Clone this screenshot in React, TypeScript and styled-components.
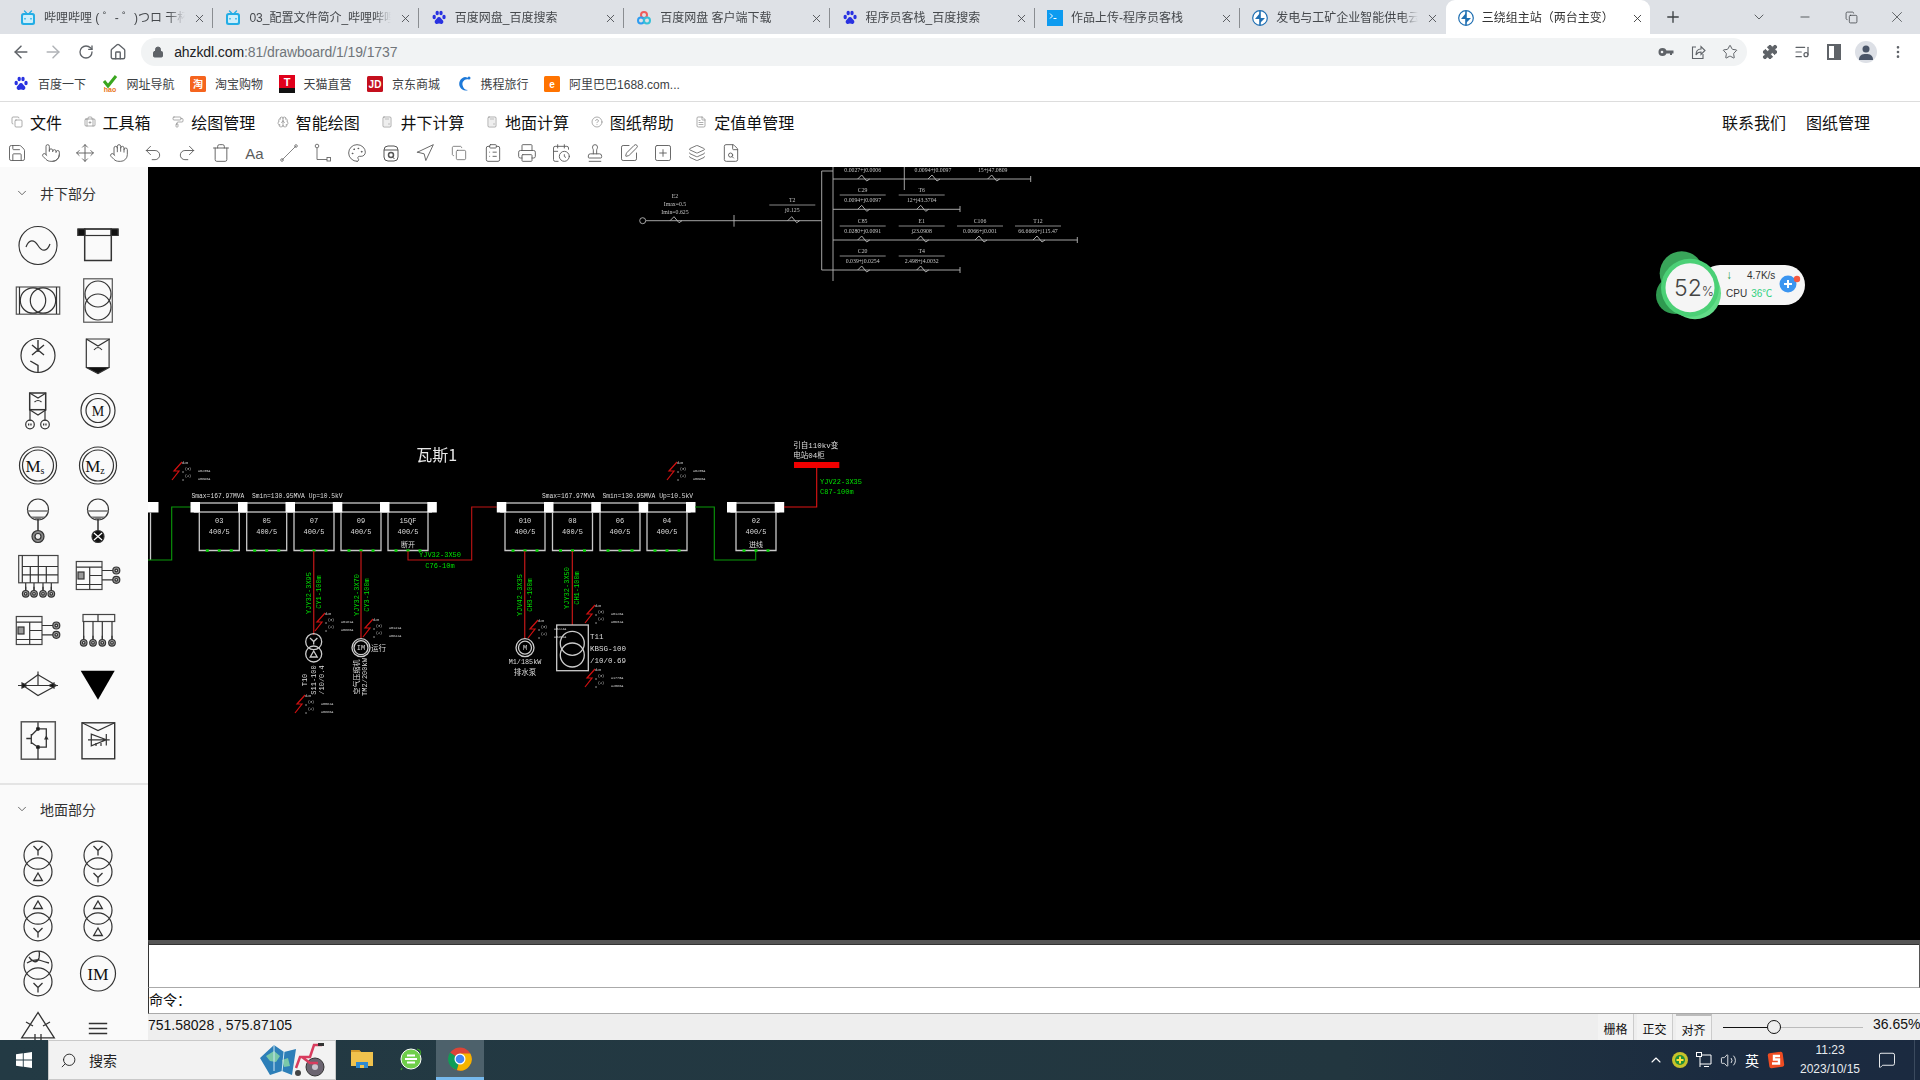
import React from "react";
import styled, { createGlobalStyle } from "styled-components";
import {
  ArrowLeft, ArrowRight, RotateCw, House, Lock, Star, Puzzle, ListMusic, EllipsisVertical,
  ChevronDown, Minus, X, Plus, Copy, BriefcaseMedical, PaintRoller, Brain, Calculator, CircleHelp, FileText,
  Save, Pointer, Move, Hand, Undo2, Redo2, Trash, Palette, Navigation, ClipboardList, Printer, Search, ChevronUp, Volume2, MessageSquare, CalendarClock, Stamp, SquarePen, SquarePlus, FileSearch, Layers,
} from "lucide-react";

const CJK = `"Liberation Sans", "Noto Sans CJK SC", sans-serif`;

const Global = createGlobalStyle`
  html, body { margin: 0; padding: 0; background: #fff; }
  body { font-family: ${CJK}; overflow: hidden; }
  #root { width: 1920px; height: 1080px; }
`;

const Page = styled.div`
  width: 1920px; height: 1080px; display: flex; flex-direction: column; overflow: hidden; background: #fff;
`;

/* ---------- browser chrome ---------- */
const TabStrip = styled.div`
  height: 34px; background: #dee1e6; display: flex; align-items: stretch; padding-left: 8px; flex: none;
`;
const Tab = styled.div<{ $active?: boolean }>`
  width: 204.4px; flex: none; box-sizing: border-box; display: flex; align-items: center; gap: 8px; padding: 2px 6px 0 12px;
  background: ${p => (p.$active ? "#fff" : "transparent")};
  border-radius: ${p => (p.$active ? "9px 9px 0 0" : "0")};
  color: ${p => (p.$active ? "#333" : "#45484c")};
`;
const TabTitle = styled.span`
  flex: 1; min-width: 0; white-space: nowrap; overflow: hidden; font-size: 12px; line-height: 16px;
  -webkit-mask-image: linear-gradient(to right, #000 88%, transparent 100%);
  mask-image: linear-gradient(to right, #000 88%, transparent 100%);
`;
const TabDivider = styled.div<{ $hidden?: boolean }>`
  width: 1px; height: 20px; align-self: center; flex: none; margin-top: 2px;
  background: ${p => (p.$hidden ? "transparent" : "#8a8d91")};
`;
const NewTab = styled.div`
  width: 44px; display: flex; align-items: center; justify-content: center; color: #3c4043; flex: none;
`;
const WindowButtons = styled.div`
  margin-left: auto; display: flex; align-items: center; color: #3c4043; padding-right: 0;
`;
const WinButton = styled.div`
  width: 46px; height: 30px; display: flex; align-items: center; justify-content: center;
`;
const NavRow = styled.div`
  height: 32px; box-sizing: border-box; padding: 4px 10px 0 9px; flex: none; background: #fff; display: flex; align-items: flex-start; color: #5f6368;
`;
const NavButton = styled.div<{ $dim?: boolean; $right?: boolean }>`
  width: 24px; height: 28px; display: flex; align-items: center; justify-content: center; flex: none;
  margin-right: ${p => (p.$right ? "0" : "8.3px")};
  margin-left: ${p => (p.$right ? "8px" : "0")};
  color: ${p => (p.$dim ? "#b0b3b7" : "#5f6368")};
`;
const UrlBar = styled.div`
  flex: 1; height: 28px; margin: 0 3px 0 3px; border-radius: 14px; background: #f1f3f4; display: flex; align-items: center;
  padding: 0 9px 0 11px; gap: 10px;
`;
const UrlText = styled.div`
  font-size: 14px; color: #70757a; flex: 1; letter-spacing: -0.1px;
  b { font-weight: normal; color: #202124; }
`;
const UrlActions = styled.div`
  display: flex; gap: 16px; color: #5f6368;
`;
const Avatar = styled.div`
  width: 22px; height: 22px; border-radius: 50%; background: #dde0e6; display: flex; align-items: center; justify-content: center;
`;
const Bookmarks = styled.div`
  height: 36px; flex: none; box-sizing: border-box; border-bottom: 1px solid #ddd; display: flex; align-items: center; padding: 0 0 0 13px; gap: 15.5px;
`;
const Bookmark = styled.div`
  display: flex; align-items: center; gap: 9px; font-size: 12px; color: #3c4043;
`;

/* ---------- app header ---------- */
const MenuBar = styled.div`
  height: 34px; flex: none; box-sizing: border-box; padding: 6px 50px 0 11px; display: flex; align-items: center; gap: 21.6px; background: #fff;
`;
const MenuItem = styled.div`
  display: flex; align-items: center; gap: 7px; font-size: 16px; color: #111; white-space: nowrap;
  svg { color: #8a8a8a; flex: none; }
`;
const MenuRight = styled.div`
  margin-left: auto; display: flex; gap: 20px; font-size: 16px; color: #111;
`;
const ToolBar = styled.div`
  height: 31px; flex: none; box-sizing: border-box; padding: 3px 0 0 6.5px; display: flex; align-items: center; gap: 14px; color: #5c5c5c; background: #fff;
`;
const ToolIcon = styled.div`
  width: 20px; height: 20px; flex: none; display: flex; align-items: center; justify-content: center; font-size: 15px; color: #5c5c5c;
`;

/* ---------- work area ---------- */
const Work = styled.div`
  flex: 1; min-height: 0; display: flex;
`;
const Sidebar = styled.aside`
  width: 148px; flex: none; background: #fafafa; overflow: hidden; display: flex; flex-direction: column;
`;
const SectionHeader = styled.div<{ $tight?: boolean }>`
  height: ${p => (p.$tight ? "50.5px" : "51px")}; flex: none; box-sizing: border-box; padding: 0 0 ${p => (p.$tight ? "3px" : "0")} 15px; display: flex; align-items: center; gap: 11px; font-size: 14px; color: #333;
  svg { color: #555; }
`;
const SymbolGrid = styled.div<{ $divider?: boolean }>`
  flex: none; display: grid; grid-template-columns: 60px 60px; grid-auto-rows: 55px; padding: 0 0 15px 8px;
  border-bottom: ${p => (p.$divider ? "2px solid #e4e4e4" : "none")};
`;
const Sym = styled.svg`
  width: 60px; height: 55px; fill: none; stroke: #333; stroke-width: 1.2px; display: block;
  text { stroke: none; fill: #111; font-family: "Liberation Serif", serif; text-anchor: middle; }
`;
const Main = styled.div`
  flex: 1; min-width: 0; display: flex; flex-direction: column;
`;
const Canvas = styled.div`
  height: 773px; flex: none; background: #000; position: relative; overflow: hidden;
`;
const Drawing = styled.svg`
  display: block; width: 1772px; height: 773px;
  text { font-family: "Liberation Mono", "Noto Sans CJK SC", monospace; }
`;
const OutputBox = styled.div`
  flex: none; box-sizing: border-box; background: #fff; border-top: 4px solid #555; border-left: 1px solid #333; border-right: 1px solid #555;
  box-shadow: inset 0 1px 0 #333;
  height: 48px; border-bottom: 1px solid #aaa;
`;
const CommandLine = styled.div`
  height: 26px; flex: none; box-sizing: border-box; background: #fff; border-left: 1px solid #333; border-bottom: 1px solid #aaa; display: flex; align-items: center; font-size: 14px; color: #111; padding-bottom: 4px;
`;
const StatusBar = styled.div`
  height: 26px; flex: none; background: #eee; display: flex; align-items: center; font-size: 14px; color: #111;
`;
const Coords = styled.span`
  margin-bottom: 4px;
`;
const StatusRight = styled.div`
  margin-left: auto; display: flex; align-items: stretch; height: 100%;
`;
const ModeButton = styled.div<{ $on?: boolean }>`
  width: 36px; box-sizing: border-box; margin-right: 3px; font-size: 12px; display: flex; align-items: center; justify-content: center; padding-top: 3px;
  background: #f3f3f3; border-right: 1px solid #ccc; color: #111;
  border-top: ${p => (p.$on ? "2px solid #bbb" : "0")};
`;
const SliderTrack = styled.div`
  width: 140px; margin: 0 10px 0 8px; align-self: center; height: 1px; background: #bbb; display: flex; align-items: center;
`;
const SliderFill = styled.div`
  height: 1px; background: #111;
`;
const SliderThumb = styled.div`
  width: 14px; height: 14px; border-radius: 50%; border: 1.5px solid #111; background: #eee; box-sizing: border-box; flex: none;
`;
const Zoom = styled.div`
  width: 47px; flex: none; align-self: flex-start; margin-top: 2px; white-space: nowrap;
`;

/* ---------- floating widget ---------- */
const Monitor360 = styled.div`
  position: absolute; left: 1502px; top: 78px; width: 156px; height: 76px;
`;
const Pill = styled.div`
  position: absolute; left: 50px; top: 20px; width: 105px; height: 40px; box-sizing: border-box; border-radius: 20px; background: #f6f6f6; padding: 4px 0 0 26px; font-size: 10px; display: flex; flex-direction: column; gap: 5px;
`;
const PillRow = styled.div`
  display: flex; align-items: center; color: #333; white-space: nowrap; line-height: 13px;
`;
const PillArrow = styled.span`
  color: #1d9c4f; width: 21px; font-size: 12px; font-weight: 700;
`;
const PillGreen = styled.span`
  color: #2fd07e; margin-left: 4px;
`;
const RingArt = styled.svg`
  position: absolute; left: 0; top: 0; width: 156px; height: 76px;
  text { font-family: "Inter", "Liberation Sans", sans-serif; fill: #444; }
`;

/* ---------- taskbar ---------- */
const Taskbar = styled.div`
  height: 40px; flex: none; display: flex; align-items: stretch; color: #fff;
  background: linear-gradient(to right, #233a44 0%, #22363f 70%, #1b2b40 90%, #1b2a40 100%);
`;
const StartButton = styled.div`
  width: 48px; flex: none; display: flex; align-items: center; justify-content: center;
`;
const SearchBox = styled.div`
  width: 288px; flex: none; box-sizing: border-box; background: #f2f2f2; border: 1px solid #c9c9c9; display: flex; align-items: center; padding: 0 9px 0 11px; color: #222; font-size: 14px; gap: 12px;
`;
const SearchArt = styled.svg`
  margin-left: auto; flex: none;
`;
const TaskIcons = styled.div`
  display: flex; gap: 1px; padding-left: 2px;
`;
const TaskIcon = styled.div<{ $active?: boolean }>`
  width: 48px; flex: none; box-sizing: border-box; display: flex; align-items: center; justify-content: center;
  background: ${p => (p.$active ? "#4d616b" : "transparent")};
  border-bottom: ${p => (p.$active ? "3px solid #76b9ed" : "3px solid transparent")};
`;
const Tray = styled.div`
  margin-left: auto; display: flex; align-items: center; padding-right: 5px;
`;
const TrayIcon = styled.div`
  width: 18px; height: 24px; margin-right: 6px; display: flex; align-items: center; justify-content: center; font-size: 14px;
`;
const Clock = styled.div`
  width: 72px; margin-left: 3px; text-align: center; font-size: 12px; line-height: 19px; color: #e8ecef; white-space: nowrap;
`;
const Notify = styled.div`
  width: 42px; display: flex; justify-content: center;
`;
const EdgeLine = styled.div`
  width: 1px; height: 100%; margin-left: 6px; background: #3b4a5e;
`;

/* ---------- little drawings ---------- */
const BiliIcon = () => (
  <svg width="16" height="16" viewBox="0 0 16 16">
    <path d="M4.500 1 6.500 3M11.500 1 9.500 3" stroke="#23ade5" strokeWidth="1.300" strokeLinecap="round" />
    <rect x="1" y="3" width="14" height="12" rx="2.500" fill="#23ade5" />
    <rect x="3" y="5" width="10" height="8" rx="1" fill="#cdeefa" />
    <path d="M5 8v1.500M11 8v1.500" stroke="#23ade5" strokeWidth="1.400" />
  </svg>
);
const PawIcon = ({ s = 16 }: { s?: number }) => (
  <svg width={s} height={s} viewBox="0 0 16 16" fill="#2932e1">
    <ellipse cx="3.200" cy="7" rx="1.700" ry="2.200" /><ellipse cx="6.200" cy="3" rx="1.700" ry="2.300" /><ellipse cx="10" cy="3" rx="1.700" ry="2.300" /><ellipse cx="13" cy="7" rx="1.700" ry="2.200" />
    <path d="M8 7c-2 0-2 2-3.500 3-1.500 1.200-1 4 1.500 4 1 0 1.200-.4 2-.4s1 .4 2 .4c2.600 0 3-2.800 1.500-4C10 9 10 7 8 7z" />
  </svg>
);
const NetdiskIcon = () => (
  <svg width="16" height="16" viewBox="0 0 16 16" fill="none" strokeWidth="2">
    <circle cx="8" cy="5" r="3" stroke="#ef5b5b" /><circle cx="5" cy="10.500" r="3" stroke="#2e9cf0" /><circle cx="11" cy="10.500" r="3" stroke="#35c0d8" />
  </svg>
);
const TermIcon = () => (
  <svg width="16" height="16" viewBox="0 0 16 16">
    <rect width="16" height="16" fill="#0d9bf0" />
    <path d="M3 3.500 5.500 6 3 8.500M6.500 8.500h3" stroke="#fff" strokeWidth="1" fill="none" />
  </svg>
);
const CompanyIcon = () => (
  <svg width="16" height="16" viewBox="0 0 16 16">
    <circle cx="8" cy="8" r="7.300" fill="#fff" stroke="#1f6fb2" strokeWidth="1.200" />
    <path d="M8 1v14" stroke="#1f6fb2" strokeWidth="1.600" />
    <path d="M8 3 3 9h5zM8 13l5-5H8z" fill="#1f6fb2" />
  </svg>
);
const BmSquare = ({ bg, t, c = "#fff" }: { bg: string; t: string; c?: string }) => (
  <svg width="16" height="16" viewBox="0 0 16 16">
    <rect width="16" height="16" rx="1.500" fill={bg} />
    <text x="8" y="12" fontSize="10" fontWeight="700" fill={c} textAnchor="middle" fontFamily="Liberation Sans, Noto Sans CJK SC, sans-serif">{t}</text>
  </svg>
);
const HaoIcon = () => (
  <svg width="16" height="18" viewBox="0 0 16 18">
    <path d="M2 6 6 11 14 1" stroke="#3aa61f" strokeWidth="3" fill="none" />
    <text x="8" y="17" fontSize="7" fill="#e8761a" textAnchor="middle" fontFamily="Liberation Sans, sans-serif" fontWeight="700">hao</text>
  </svg>
);
const TmallIcon = () => (
  <svg width="16" height="18" viewBox="0 0 16 18">
    <rect width="16" height="18" fill="#111" /><rect width="16" height="13" fill="#e0001b" />
    <text x="8" y="11" fontSize="11" fontWeight="700" fill="#fff" textAnchor="middle" fontFamily="Liberation Sans, sans-serif">T</text>
  </svg>
);
const CtripIcon = () => (
  <svg width="16" height="18" viewBox="0 0 16 18" fill="none">
    <path d="M9 2C4 3 2 8 4 12c1.500 3 5 4.500 8 3-3 0-5-2-5.500-5C6 7 8 4 13 4 12 3 11 2 9 2z" fill="#1d79d9" />
    <circle cx="13" cy="3" r="1.500" fill="#1d79d9" />
  </svg>
);
const KeyIcon = () => (
  <svg width="16" height="16" viewBox="0 0 16 16" fill="#5f6368"><circle cx="4.500" cy="8" r="4" /><circle cx="4" cy="8" r="1.300" fill="#f1f3f4" /><path d="M8 6.500h7.500v3H14v1.500h-2V9.500H8z" /></svg>
);
const ShareIcon = () => (
  <svg width="16" height="16" viewBox="0 0 16 16" fill="none" stroke="#5f6368" strokeWidth="1.100"><path d="M6 3H2.500v11.500h10.500V10" /><path d="M6 11c0-4 2-6 5-6V2.500l4 4-4 4V8c-2 0-4 1-5 3z" /></svg>
);
const NetIcon = () => (
  <svg width="18" height="18" viewBox="0 0 18 18" fill="none" stroke="#fff" strokeWidth="1"><rect x="1.500" y="1.500" width="5" height="4" /><path d="M6.500 4H16v9H5M5 5.500V16M9 15.500h5" /></svg>
);

const ToolLine = () => <svg width="20" height="20" viewBox="0 0 20 20" fill="none" stroke="#777" strokeWidth=".9"><path d="M3 17 17 3" /><circle cx="3" cy="17" r="1.300" /><circle cx="17" cy="3" r="1.300" /></svg>;
const ToolPoly = () => <svg width="20" height="20" viewBox="0 0 20 20" fill="none" stroke="#666" strokeWidth=".9"><circle cx="4" cy="3" r="1.800" /><path d="M4 5v11.500h10" /><rect x="14" y="14.500" width="3.500" height="3.500" /></svg>;
const ToolQ = () => <svg width="20" height="20" viewBox="0 0 20 20" fill="none" stroke="#555" strokeWidth="1"><rect x="3" y="3" width="14" height="15" rx="4" /><path d="M3 7h14" /><circle cx="10" cy="12" r="2.500" strokeWidth="1.500" /><path d="m11.500 14 2 2" /></svg>;

const Sine = () => (
  <Sym viewBox="0 0 60 55"><circle cx="30" cy="27.500" r="19" /><path d="M18 29c3-8 8-8 12-1.500s9 6.500 12-1.500" /></Sym>
);
const Breaker = () => (
  <Sym viewBox="0 0 60 55"><rect x="16.700" y="11" width="26.600" height="31.500" strokeWidth="1.500" /><path d="M10 11h40v6.500H10z" /><path d="M10 11h7v6.500h-7zM43 11h7v6.500h-7z" fill="#111" /><path d="M17 17.500h26" /></Sym>
);
const DualH = () => (
  <Sym viewBox="0 0 60 55"><rect x="8.300" y="14" width="43.400" height="27.200" stroke="#555" /><path d="M11.500 14v27M48.500 14v27" /><circle cx="25" cy="27.500" r="12.700" /><circle cx="35" cy="27.500" r="12.700" /></Sym>
);
const DualV = () => (
  <Sym viewBox="0 0 60 55"><rect x="15.700" y="5.800" width="28.600" height="43.400" stroke="#555" /><circle cx="30" cy="21" r="13" /><circle cx="30" cy="34" r="13" /></Sym>
);
const StarMotor = () => (
  <Sym viewBox="0 0 60 55"><circle cx="30" cy="27.500" r="17" /><path d="M30 12v12M24 17l12 10M36 17 24 27" strokeWidth="1.400" /><path d="M22.300 33 30 37.500v7" strokeWidth="1.400" /></Sym>
);
const ChevBox = () => (
  <Sym viewBox="0 0 60 55"><path d="M18.300 11h22.800v28.500l-5 0H18.300z" /><path d="M18.300 11 30 18l11.700-7" /><path d="M26 22q4-5 8 0" /><path d="M18.300 39.500h22.800L30 45.500z" fill="#111" /></Sym>
);
const PinBox = () => (
  <Sym viewBox="0 0 60 55"><rect x="21.700" y="10" width="16" height="16.700" strokeWidth="1.500" /><path d="M21.700 10 30 15l8-5M26.500 19q3.500-3 7 0M21.700 26.700 30 32l8-5.300" /><path d="M22 27v11M37 27v11" /><circle cx="22" cy="41.500" r="4.300" /><circle cx="37" cy="41.500" r="4.300" /><path d="M20 41.500h4M35 41.500h4" strokeWidth="1.800" strokeDasharray="1 .7" /></Sym>
);
const MotorM = () => (
  <Sym viewBox="0 0 60 55"><circle cx="30" cy="27.500" r="17" /><circle cx="30" cy="27.500" r="12" /><text x="30" y="33" fontSize="14">M</text></Sym>
);
const MotorSub = ({ sub }: { sub: string }) => (
  <Sym viewBox="0 0 60 55"><circle cx="30" cy="27.500" r="18.500" /><circle cx="30" cy="27.500" r="15.500" /><text x="27" y="34" fontSize="17">M<tspan fontSize="10" dy="2">{sub}</tspan></text></Sym>
);
const Ball = ({ black }: { black?: boolean }) => (
  <Sym viewBox="0 0 60 55">
    <circle cx="30" cy="16.500" r="10.500" /><path d="M19.500 18h21" strokeWidth="1.800" stroke="#888" /><path d="M22 23.500h16L30 27z" fill="#777" stroke="none" />
    <path d="M30 26v14" strokeWidth="1.500" />
    <circle cx="30" cy="43.500" r="6" fill={black ? "#111" : "#888"} />
    {black ? <path d="M26 40l8 7M34 40l-8 7" stroke="#fff" /> : <circle cx="30" cy="43.500" r="3" fill="#eee" />}
  </Sym>
);
const Pins = ({ xs, y }: { xs: number[]; y: number }) => (
  <>{xs.map(x => <g key={x}><path d={`M${x} ${y - 7}v3.500`} /><circle cx={x} cy={y} r="3.300" fill="#999" /><circle cx={x} cy={y} r="1.300" fill="#eee" /></g>)}</>
);
const GridPanel = () => (
  <Sym viewBox="0 0 60 55"><rect x="10.700" y="7.500" width="39.300" height="27.300" stroke="#444" /><path d="M14.300 7.500v27.300M30.300 7.500v27.300M14 18.500h36M14 26.800h36M22.300 18.500v16.300M38.300 18.500v16.300" /><path d="M17.700 35v7M26 35v7M35 35v7M43.300 35v7" /><Pins xs={[17.700, 26, 35, 43.300]} y={45.800} /></Sym>
);
const SidePanel = () => (
  <Sym viewBox="0 0 60 55"><rect x="8.300" y="13.500" width="25.700" height="28" stroke="#444" /><path d="M8.300 19.200H34M8.300 36.500H34M21.700 19.200v22.300M21.700 27.500H34" /><rect x="10" y="24" width="6" height="7" fill="#999" /><path d="M34 22.500h11M34 31.800h11" /><circle cx="48.300" cy="22.500" r="3.500" fill="#999" /><circle cx="48.300" cy="31.800" r="3.500" fill="#999" /><circle cx="48.300" cy="22.500" r="1.300" fill="#eee" /><circle cx="48.300" cy="31.800" r="1.300" fill="#eee" /></Sym>
);
const TopPanel = () => (
  <Sym viewBox="0 0 60 55"><rect x="15" y="11.500" width="31.700" height="7" stroke="#444" /><path d="M30 11.500v7M15.700 18.500V36M25 18.500V36M34.300 18.500V36M44 18.500V36" /><Pins xs={[15.700, 25, 34.300, 44]} y={39.800} /></Sym>
);
const Diamond = () => (
  <Sym viewBox="0 0 60 55"><path d="M30 16.800 48.300 27.500 30 37.500 15 27.500z" /><path d="M10 27.500h40M30 13.500v14" /><path d="M14 25v5l5-2.500zM46 25v5l-5-2.500z" fill="#111" /></Sym>
);
const BlackTri = () => (
  <Sym viewBox="0 0 60 55"><path d="M12.700 12.800h34L30 41.800z" fill="#000" stroke="none" /></Sym>
);
const Igbt = () => (
  <Sym viewBox="0 0 60 55"><rect x="13.300" y="8.800" width="34" height="37.400" stroke="#555" strokeWidth="1.500" /><path d="M30 9.200v6.600h8.300v18.400H30v12.300M30 15.800l-6.700 6.700M23.300 21v10M18.300 25.500h5M23.300 29.500l6.700 4.700" strokeWidth="1.300" /><circle cx="30" cy="15.800" r="1.500" fill="#111" /><circle cx="30" cy="34.200" r="1.500" fill="#111" /><path d="M37 26h2.600l-1.300-2.500z" fill="#111" /></Sym>
);
const DiodeBox = () => (
  <Sym viewBox="0 0 60 55"><rect x="14" y="9.800" width="32.700" height="36" strokeWidth="1.400" /><path d="M14 9.800 30 17.500l16.700-7.700" /><path d="M23.300 21.200v11.600l15-6zM38.300 21v11.600M20 26.800h21.700" /><path d="M28 30v3M33 30v3" /></Sym>
);
const WindingY = ({ cy }: { cy: number }) => <path d={`M25.500 ${cy - 4}l4.500 4.500 4.500-4.500M30 ${cy + .5}v5`} strokeWidth="1.300" />;
const WindingD = ({ cy }: { cy: number }) => <path d={`M30 ${cy - 4}l4.300 7.500h-8.600z`} strokeWidth="1.300" />;
const Transformer = ({ top, bottom }: { top: "Y" | "D" | "W"; bottom: "Y" | "D" }) => (
  <Sym viewBox="0 0 60 55">
    <circle cx="30" cy="19.200" r="14" /><circle cx="30" cy="35.800" r="14" />
    {top === "Y" && <WindingY cy={14} />}
    {top === "D" && <WindingD cy={14} />}
    {top === "W" && <path d="M21 11q7 9 10 1 1-4 0-7M19 17q6-4 12-3 6 2 10 3" strokeWidth="1.300" />}
    {bottom === "Y" ? <WindingY cy={41} /> : <WindingD cy={41} />}
  </Sym>
);
const MotorIM = () => (
  <Sym viewBox="0 0 60 55"><circle cx="30" cy="27.500" r="17.500" /><text x="30" y="34" fontSize="17.500">IM</text></Sym>
);
const TriBreak = () => (
  <Sym viewBox="0 0 60 55"><path d="M30 11.500 13.700 36.800h32.600zM18 21l7 4M42 21l-7 4M27 33v8M33 33v8" strokeWidth="1.300" /></Sym>
);
const Bars = () => (
  <Sym viewBox="0 0 60 55"><path d="M20.800 22.500h18.400M20.800 27.500h18.400M20.800 32.500h18.400" strokeWidth="1.400" /></Sym>
);

/* ---------- diagram helpers (screen coordinates) ---------- */
const LINE = "#c9c9c9";
const SERIF = { fontFamily: '"Liberation Serif", serif' };
const Wave = ({ x, y }: { x: number; y: number }) => (
  <path d={`M${x - 5} ${y}L${x - 1} ${y - 4}L${x + 4} ${y + 2}L${x + 7} ${y}`} fill="none" stroke="#bbb" strokeWidth=".9" />
);
const NetLabel = ({ x, y, name, value }: { x: number; y: number; name: string; value: string }) => (
  <g fontSize="5.800" fill="#c4c4c4" textAnchor="middle">
    {name && <text x={x} y={y + 2} style={SERIF}>{name}</text>}
    <path d={`M${x - 23} ${y + 5}h46`} stroke="#aaa" strokeWidth=".8" />
    <text x={x} y={y + 12} style={SERIF}>{value}</text>
  </g>
);
const Bus = ({ xs }: { xs: number[] }) => (
  <g>
    <rect x={xs[0] + 4} y="503" width={xs[xs.length - 1] - xs[0]} height="9" fill="none" stroke={LINE} strokeWidth="1.300" />
    {xs.map(x => <rect key={x} x={x} y="502" width="9.500" height="10.500" fill="#fff" />)}
  </g>
);
const Panel = ({ x, a, b, c }: { x: number; a: string; b: string; c?: string }) => (
  <g>
    <path d={`M${x} 512V550.500H${x + 40}V512`} fill="none" stroke={LINE} strokeWidth="1.300" />
    <g fontSize="7" fill="#ddd" textAnchor="middle">
      <text x={x + 20} y="522.500">{a}</text>
      <text x={x + 20} y="533.500">{b}</text>
      {c && <text x={x + 20} y="547">{c}</text>}
    </g>
    {[8, 20, 32].map(d => <rect key={d} x={x + d - 1.500} y="549.300" width="3" height="2.500" fill="#0c0" />)}
  </g>
);
const Rot = ({ x, y, t, c = "#00e000", s = 7 }: { x: number; y: number; t: string; c?: string; s?: number }) => (
  <text transform={`translate(${x} ${y}) rotate(-90)`} fontSize={s} fill={c} textAnchor="middle" dominantBaseline="central">{t}</text>
);
const Fault = ({ x, y, a, b, n = "d20" }: { x: number; y: number; a: string; b: string; n?: string }) => (
  <g>
    <path d={`M${x + 5} ${y - 9}L${x - 3} ${y}L${x + 2} ${y}L${x - 5} ${y + 9}`} fill="none" stroke="#d01010" strokeWidth="1.200" />
    <g fontSize="3.400" fill="#ddd">
      <text x={x + 5} y={y - 7}>{n}</text>
      <text x={x + 5} y={y + 1.500}>I</text>
      <text x={x + 8} y={y - 1}>(3)</text>
      <text x={x + 21} y={y + .5}>={a}</text>
      <text x={x + 5} y={y + 9.500}>I</text>
      <text x={x + 8} y={y + 6}>(2)</text>
      <text x={x + 21} y={y + 8.500}>={b}</text>
    </g>
  </g>
);

const busA = [190.500, 238, 285.500, 332.800, 380, 427.300];
const busB = [496.800, 544, 591.300, 638.700, 686];
const branchTicks: [number, number][] = [[862.7, 179], [933, 179], [992.7, 179], [862.7, 209.3], [921.7, 209.3], [862.7, 240], [921.7, 240], [980, 240], [1038, 240], [862.7, 270], [921.7, 270]];

const Diagram = () => (
  <Drawing viewBox="148 167 1772 773">
    <g style={{ filter: "blur(.35px)" }}>
      {/* network diagram */}
      <g stroke="#b5b5b5" strokeWidth=".9" fill="none">
        <circle cx="642.700" cy="220.700" r="3" />
        <path d="M646 220.700H821.700M734 215V226.700M821.700 171V270M821.700 171H833M833 167V281M833 179H1030.700M1030.700 176V182M904.300 167V190M833 209.300H960M960 206V212M833 240H1077.300M1077.300 237V243M821.700 270H960M960 267V273" />
      </g>
      <Wave x={675} y={220.700} /><Wave x={792.700} y={220.700} />
      {branchTicks.map(([x, y]) => <Wave key={`${x}-${y}`} x={x} y={y} />)}
      <g fontSize="5.800" fill="#c4c4c4" textAnchor="middle">
        <text x="675" y="198" style={SERIF}>E2</text>
        <text x="675" y="206" style={SERIF}>Imax=0.5</text>
        <text x="675" y="214" style={SERIF}>Imin=0.625</text>
        <text x="862.700" y="172" style={SERIF}>0.0027+j0.0006</text>
        <text x="933" y="172" style={SERIF}>0.0094+j0.0097</text>
        <text x="992.700" y="172" style={SERIF}>15+j47.0809</text>
      </g>
      <NetLabel x={792.300} y={200} name="T2" value="j0.125" />
      <NetLabel x={862.700} y={190} name="C29" value="0.0094+j0.0097" />
      <NetLabel x={921.700} y={190} name="T6" value="12+j43.3704" />
      <NetLabel x={862.700} y={221} name="C85" value="0.0280+j0.0091" />
      <NetLabel x={921.700} y={221} name="E1" value="j23.0908" />
      <NetLabel x={980} y={221} name="C106" value="0.0066+j0.001" />
      <NetLabel x={1038} y={221} name="T12" value="66.6666+j115.47" />
      <NetLabel x={862.700} y={251} name="C20" value="0.039+j0.0254" />
      <NetLabel x={921.700} y={251} name="T4" value="2.498+j4.0032" />

      {/* bus A */}
      <rect x="148" y="502" width="10.500" height="10.500" fill="#fff" />
      <path d="M150.500 512.500V560" stroke={LINE} strokeWidth="1.300" fill="none" />
      <path d="M148 560H171.700V507H190.700" stroke="#0a9a0a" strokeWidth="1.100" fill="none" />
      <Bus xs={busA} />
      <text x="191.500" y="498" fontSize="6.300" fill="#ddd" xmlSpace="preserve">Smax=167.97MVA  Smin=130.95MVA Up=10.5kV</text>
      <text x="436.700" y="461" fontSize="16" fill="#e8e8e8" textAnchor="middle" style={{ fontFamily: '"Noto Sans CJK SC", serif' }}>瓦斯1</text>
      <Panel x={199.300} a="03" b="400/5" />
      <Panel x={246.700} a="05" b="400/5" />
      <Panel x={294} a="07" b="400/5" />
      <Panel x={341} a="09" b="400/5" />
      <Panel x={388} a="15QF" b="400/5" c="断开" />

      <Fault x={177} y={471} a="0235A" b="0898A" />
      <path d="M313.700 551V635M361 551V638" stroke="#a81414" strokeWidth="1.400" />
      <Rot x={309} y={593} t="YJY32-3X95" /><Rot x={319} y={592} t="CY1-100m" />
      <Rot x={357} y={595} t="YJY32-3X70" /><Rot x={367} y={595} t="CY3-100m" />
      <Fault x={320} y={622} a="0181A" b="0888A" />
      <Fault x={368} y={628} a="0141A" b="0842A" />
      <g fill="none" stroke="#ccc" strokeWidth="1.300">
        <circle cx="313.700" cy="641.700" r="8" /><circle cx="313.700" cy="654" r="8" />
        <path d="M310 638l3.700 3.500 3.700-3.500M313.700 641.500v3M313.700 651l3.500 6h-7z" />
        <circle cx="361" cy="647.700" r="9" /><circle cx="361" cy="647.700" r="7" />
      </g>
      <text x="361" y="650" fontSize="7" fill="#ddd" textAnchor="middle">IM</text>
      <text x="371" y="651" fontSize="7.500" fill="#ddd">运行</text>
      <Rot x={305} y={680} t="T10" c="#ddd" /><Rot x={314} y={680} t="S11-100" c="#ddd" /><Rot x={322} y={680} t="/10/0.4" c="#ddd" />
      <Rot x={357} y={677} t="空气压缩机" c="#ddd" /><Rot x={365} y={677} t="TM2/200kW" c="#ddd" />
      <Fault x={300} y={704} a="0082A" b="0888A" />
      <path d="M408 551V560H471.700V507H496.700" stroke="#c01414" strokeWidth="1.100" fill="none" />
      <text x="440" y="556.500" fontSize="7" fill="#00e000" textAnchor="middle">YJV32-3X50</text>
      <text x="440" y="567.500" fontSize="7" fill="#00e000" textAnchor="middle">C76-10m</text>

      {/* bus B */}
      <Bus xs={busB} />
      <text x="542" y="498" fontSize="6.300" fill="#ddd" xmlSpace="preserve">Smax=167.97MVA  Smin=130.95MVA Up=10.5kV</text>
      <Panel x={505} a="010" b="400/5" />
      <Panel x={552.500} a="08" b="400/5" />
      <Panel x={600} a="06" b="400/5" />
      <Panel x={647} a="04" b="400/5" />
      <Fault x={672} y={471} a="0235A" b="0898A" />
      <path d="M695 507H714.300V560H755.700V551" stroke="#0a9a0a" strokeWidth="1.100" fill="none" />
      <path d="M524.700 551V638" stroke="#a81414" strokeWidth="1.400" />
      <path d="M572.300 551V625" stroke="#d81818" strokeWidth="1.100" />
      <Rot x={520} y={595} t="YJV42-3X35" /><Rot x={530} y={595} t="CH3-100m" />
      <Rot x={567} y={588} t="YJY32-3X50" /><Rot x={577} y={588} t="CH1-100m" />
      <g fill="none" stroke="#ccc" strokeWidth="1.300">
        <circle cx="525" cy="647.700" r="9" /><circle cx="525" cy="647.700" r="6.500" />
        <rect x="556.700" y="625" width="31.600" height="45.700" />
        <circle cx="572.300" cy="643.300" r="12" /><circle cx="572.300" cy="655" r="12" />
      </g>
      <text x="525" y="650" fontSize="7" fill="#ddd" textAnchor="middle">M</text>
      <text x="525" y="664" fontSize="6.800" fill="#ddd" textAnchor="middle">M1/185kW</text>
      <text x="525" y="675" fontSize="7.500" fill="#ddd" textAnchor="middle">排水泵</text>
      <g fontSize="7.500" fill="#ddd">
        <text x="590" y="639">T11</text>
        <text x="590" y="651">KBSG-100</text>
        <text x="590" y="663">/10/0.69</text>
      </g>
      <Fault x={533} y={629} a="0224A" b="0462A" />
      <Fault x={590} y={614} a="0128A" b="0632A" />
      <Fault x={590} y={678} a="1770A" b="2088A" />

      {/* bus C */}
      <Bus xs={[727, 774.700]} />
      <Panel x={736} a="02" b="400/5" c="进线" />
      <path d="M784 507H816.700V465" stroke="#e01414" strokeWidth="1.100" fill="none" />
      <rect x="794" y="462" width="45.300" height="6" fill="#f00000" />
      <text x="793.300" y="448" fontSize="7.500" fill="#ddd">引自110kv变</text>
      <text x="793.300" y="458" fontSize="7.500" fill="#ddd">电站04柜</text>
      <text x="820" y="483.500" fontSize="7" fill="#00e000">YJV22-3X35</text>
      <text x="820" y="493.500" fontSize="7" fill="#00e000">C87-100m</text>
    </g>
  </Drawing>
);

const tabs: [React.ReactNode, string][] = [
  [<BiliIcon />, "哔哩哔哩 ( ゜- ゜)つロ 干杯"],
  [<BiliIcon />, "03_配置文件简介_哔哩哔哩"],
  [<PawIcon />, "百度网盘_百度搜索"],
  [<NetdiskIcon />, "百度网盘 客户端下载"],
  [<PawIcon />, "程序员客栈_百度搜索"],
  [<TermIcon />, "作品上传-程序员客栈"],
  [<CompanyIcon />, "发电与工矿企业智能供电云"],
  [<CompanyIcon />, "三绕组主站（两台主变）"],
];
const bookmarks: [React.ReactNode, string][] = [
  [<PawIcon />, "百度一下"],
  [<HaoIcon />, "网址导航"],
  [<BmSquare bg="#f5641e" t="淘" />, "淘宝购物"],
  [<TmallIcon />, "天猫直营"],
  [<BmSquare bg="#c40f1d" t="JD" />, "京东商城"],
  [<CtripIcon />, "携程旅行"],
  [<BmSquare bg="#ff7300" t="e" />, "阿里巴巴1688.com..."],
];
const menus: [React.ComponentType<any>, string][] = [
  [Copy, "文件"], [BriefcaseMedical, "工具箱"], [PaintRoller, "绘图管理"], [Brain, "智能绘图"],
  [Calculator, "井下计算"], [Calculator, "地面计算"], [CircleHelp, "图纸帮助"], [FileText, "定值单管理"],
];
const tools: React.ReactNode[] = [
  <Save size={20} strokeWidth={1.1} />, <Pointer size={20} strokeWidth={1.1} />, <Move size={20} strokeWidth={1.1} />, <Hand size={20} strokeWidth={1.1} />,
  <Undo2 size={20} strokeWidth={1.1} />, <Redo2 size={20} strokeWidth={1.1} />, <Trash size={20} strokeWidth={1.1} />, "Aa",
  <ToolLine />, <ToolPoly />, <Palette size={20} strokeWidth={1.1} />, <ToolQ />, <Navigation size={20} strokeWidth={1.1} />,
  <Copy size={16} strokeWidth={1.1} />, <ClipboardList size={20} strokeWidth={1.1} />, <Printer size={20} strokeWidth={1.1} />,
  <CalendarClock size={20} strokeWidth={1.1} />, <Stamp size={20} strokeWidth={1.1} />, <SquarePen size={20} strokeWidth={1.1} />,
  <SquarePlus size={20} strokeWidth={1.1} />, <Layers size={18} strokeWidth={1.1} />, <FileSearch size={20} strokeWidth={1.1} />,
];

export default function App() {
  return (
    <Page>
      <Global />
      <TabStrip>
        {tabs.map(([icon, title], i) => (
          <React.Fragment key={i}>
            <Tab $active={i === 7}>
              {icon}
              <TabTitle>{title}</TabTitle>
              <X size={13} strokeWidth={1.6} />
            </Tab>
            <TabDivider $hidden={i >= 6} />
          </React.Fragment>
        ))}
        <NewTab><Plus size={18} strokeWidth={1.8} /></NewTab>
        <WindowButtons>
          <WinButton><ChevronDown size={16} strokeWidth={1.2} /></WinButton>
          <WinButton><Minus size={14} strokeWidth={1.4} /></WinButton>
          <WinButton><Copy size={13} strokeWidth={1.4} /></WinButton>
          <WinButton><X size={18} strokeWidth={1} /></WinButton>
        </WindowButtons>
      </TabStrip>

      <NavRow>
        <NavButton><ArrowLeft size={20} strokeWidth={1.8} /></NavButton>
        <NavButton $dim><ArrowRight size={20} strokeWidth={1.8} /></NavButton>
        <NavButton><RotateCw size={16} strokeWidth={2} /></NavButton>
        <NavButton><House size={18} strokeWidth={1.8} /></NavButton>
        <UrlBar>
          <Lock size={12} strokeWidth={2} fill="#5f6368" color="#5f6368" />
          <UrlText><b>ahzkdl.com</b>:81/drawboard/1/19/1737</UrlText>
          <UrlActions>
            <KeyIcon />
            <ShareIcon />
            <Star size={16} strokeWidth={1.5} />
          </UrlActions>
        </UrlBar>
        <NavButton $right><Puzzle size={16} fill="#5f6368" strokeWidth={1.5} /></NavButton>
        <NavButton $right><ListMusic size={16} strokeWidth={1.8} /></NavButton>
        <NavButton $right><svg width="14" height="16" viewBox="0 0 14 16"><rect x="1" y="1" width="12" height="14" fill="none" stroke="#5f6368" strokeWidth="2" /><rect x="7" y="1" width="6" height="14" fill="#5f6368" /></svg></NavButton>
        <NavButton $right>
          <Avatar><svg width="14" height="16" viewBox="0 0 14 16" fill="#4a5568"><circle cx="7" cy="5" r="3.500" /><path d="M0 16c0-5 3-6 7-6s7 1 7 6z" /></svg></Avatar>
        </NavButton>
        <NavButton $right><EllipsisVertical size={16} strokeWidth={2} /></NavButton>
      </NavRow>

      <Bookmarks>
        {bookmarks.map(([icon, label]) => <Bookmark key={label}>{icon}{label}</Bookmark>)}
      </Bookmarks>

      <MenuBar>
        {menus.map(([Icon, label]) => <MenuItem key={label}><Icon size={12} strokeWidth={1.4} />{label}</MenuItem>)}
        <MenuRight><span>联系我们</span><span>图纸管理</span></MenuRight>
      </MenuBar>
      <ToolBar>
        {tools.map((t, i) => <ToolIcon key={i}>{t}</ToolIcon>)}
      </ToolBar>

      <Work>
        <Sidebar>
          <SectionHeader><ChevronDown size={14} strokeWidth={1.5} />井下部分</SectionHeader>
          <SymbolGrid $divider>
            <Sine /><Breaker />
            <DualH /><DualV />
            <StarMotor /><ChevBox />
            <PinBox /><MotorM />
            <MotorSub sub="s" /><MotorSub sub="z" />
            <Ball /><Ball black />
            <GridPanel /><SidePanel />
            <SidePanel /><TopPanel />
            <Diamond /><BlackTri />
            <Igbt /><DiodeBox />
          </SymbolGrid>
          <SectionHeader $tight><ChevronDown size={14} strokeWidth={1.5} />地面部分</SectionHeader>
          <SymbolGrid>
            <Transformer top="Y" bottom="D" /><Transformer top="Y" bottom="Y" />
            <Transformer top="D" bottom="Y" /><Transformer top="D" bottom="D" />
            <Transformer top="W" bottom="Y" /><MotorIM />
            <TriBreak /><Bars />
          </SymbolGrid>
        </Sidebar>
        <Main>
          <Canvas>
            <Diagram />
            <Monitor360>
              <Pill>
                <PillRow><PillArrow>↓</PillArrow>4.7K/s</PillRow>
                <PillRow>CPU<PillGreen>36℃</PillGreen></PillRow>
              </Pill>
              <RingArt viewBox="0 0 156 76">
                <circle cx="31.700" cy="28.300" r="22" fill="#39a55a" />
                <circle cx="25" cy="50" r="19" fill="#2f9a50" />
                <circle cx="45" cy="48.300" r="26" fill="#62dc88" />
                <circle cx="40" cy="42.700" r="29" fill="#4bd076" />
                <circle cx="40" cy="42.700" r="24.500" fill="#f5f5f5" />
                <text x="24" y="51" fontSize="23" fontWeight="300">52<tspan fontSize="13">%</tspan></text>
                <circle cx="138" cy="39" r="8.500" fill="#3b95f0" />
                <path d="M134 39h8M138 35v8" stroke="#fff" strokeWidth="2" />
                <circle cx="147" cy="34" r="3.200" fill="#f4593f" />
              </RingArt>
            </Monitor360>
          </Canvas>
          <OutputBox />
          <CommandLine>命令：</CommandLine>
          <StatusBar>
            <Coords>751.58028 , 575.87105</Coords>
            <StatusRight>
              <ModeButton>栅格</ModeButton>
              <ModeButton>正交</ModeButton>
              <ModeButton $on>对齐</ModeButton>
              <SliderTrack>
                <SliderFill style={{ width: 44 }} />
                <SliderThumb />
              </SliderTrack>
              <Zoom>36.65%</Zoom>
            </StatusRight>
          </StatusBar>
        </Main>
      </Work>

      <Taskbar>
        <StartButton>
          <svg width="16" height="16" viewBox="0 0 16 16" fill="#fff"><path d="M0 2.300 6.800 1.300V7.500H0zM7.700 1.200 16 0V7.500H7.700zM0 8.500H6.800V14.700L0 13.700zM7.700 8.500H16V16L7.700 14.800z" /></svg>
        </StartButton>
        <SearchBox>
          <Search size={17} strokeWidth={1.3} style={{ transform: "scaleX(-1)" }} />
          <span>搜索</span>
          <SearchArt width="66" height="36" viewBox="0 0 66 36">
            <path d="M0 16 14 3l10 7 12-3-4 26-10-4-12 4z" fill="#2d7fb8" />
            <path d="M6 14l8-5 6 5-4 6-6-1zM22 18l6-2 2 8-6 1z" fill="#7ac8a8" />
            <path d="M14 3v26M24 10l-2 20" stroke="#cfe8f5" strokeWidth="1" fill="none" />
            <circle cx="55" cy="25" r="9" fill="#6b6470" stroke="#333" strokeWidth="1" />
            <circle cx="55" cy="25" r="3" fill="#c9c5cd" />
            <circle cx="38" cy="31" r="3" fill="#444" />
            <path d="M62 3H54L50 15H40L36 26M42 15l8 6h8" stroke="#d83c5e" strokeWidth="2.500" fill="none" />
            <rect x="58" y="1" width="6" height="3" fill="#333" />
          </SearchArt>
        </SearchBox>
        <TaskIcons>
          <TaskIcon>
            <svg width="24" height="24" viewBox="0 0 24 24"><path d="M1 3h8l2 2h12v14H1z" fill="#f0c24d" /><path d="M1 3h8l2 2H1z" fill="#d39a2a" /><rect x="6" y="15" width="12" height="6" fill="#2f8ad1" /><rect x="10" y="18" width="4" height="3" fill="#f0c24d" /></svg>
          </TaskIcon>
          <TaskIcon>
            <svg width="24" height="24" viewBox="0 0 24 24"><circle cx="12" cy="12" r="10" fill="#6fcf4a" stroke="#fff" strokeWidth="1" /><path d="M6 12h12M8 8.500h8M8 15.500h8" stroke="#fff" strokeWidth="2" /><path d="M18 2q5 1 3 6M3 21l-1 2" stroke="#3a9a2a" strokeWidth="1.200" fill="none" /></svg>
          </TaskIcon>
          <TaskIcon $active>
            <svg width="24" height="24" viewBox="0 0 24 24"><circle cx="12" cy="12" r="11.500" fill="#db4437" /><path d="M12 12 2 5.500A11.500 11.500 0 0 0 9 23.100z" fill="#0f9d58" /><path d="M12 6.500h10.300A11.500 11.500 0 0 1 9 23.100L12 12z" fill="#f4b400" /><circle cx="12" cy="12" r="5.500" fill="#fff" /><circle cx="12" cy="12" r="4.300" fill="#4285f4" /></svg>
          </TaskIcon>
        </TaskIcons>
        <Tray>
          <TrayIcon><ChevronUp size={16} strokeWidth={1.6} /></TrayIcon>
          <TrayIcon>
            <svg width="16" height="16" viewBox="0 0 16 16"><circle cx="8" cy="8" r="8" fill="#c7c22a" /><circle cx="8" cy="8" r="5" fill="#1f8f3a" /><path d="M8 4.500v7M4.500 8h7" stroke="#fde23a" strokeWidth="2" /></svg>
          </TrayIcon>
          <TrayIcon><NetIcon /></TrayIcon>
          <TrayIcon><Volume2 size={17} strokeWidth={1.2} /></TrayIcon>
          <TrayIcon>英</TrayIcon>
          <TrayIcon>
            <svg width="18" height="18" viewBox="0 0 18 18"><rect x="1.500" y="1.500" width="15" height="15" rx="2" fill="#ee4c22" transform="rotate(-8 9 9)" /><path d="M13 5H7v3.500h5V12.500H5" stroke="#fff" strokeWidth="2.400" fill="none" /></svg>
          </TrayIcon>
          <Clock>11:23<br />2023/10/15</Clock>
          <Notify><MessageSquare size={18} strokeWidth={1.2} /></Notify>
          <EdgeLine />
        </Tray>
      </Taskbar>
    </Page>
  );
}
